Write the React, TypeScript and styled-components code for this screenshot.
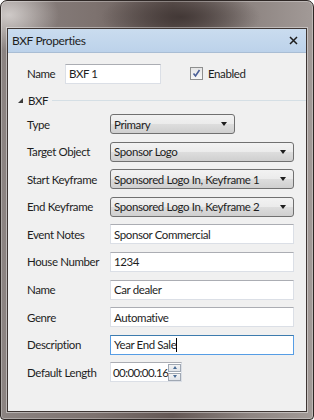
import React from 'react'
import styled, { createGlobalStyle } from 'styled-components'

const GlobalStyle = createGlobalStyle`
  html, body {
    margin: 0;
    padding: 0;
  }
  body {
    width: 314px;
    height: 420px;
    overflow: hidden;
    font-family: Lato, 'Open Sans', sans-serif;
    font-size: 11.5px;
    letter-spacing: -0.4px;
    color: #1e1e1e;
  }
`

const Frame = styled.div`
  box-sizing: border-box;
  width: 314px;
  height: 420px;
  padding: 27px 6px 7px 6px;
  border: 1px solid #2e2725;
  border-radius: 7px 7px 4px 4px;
  background:
    radial-gradient(ellipse 50px 35px at 8px 14px, rgba(230, 226, 224, 0.75), transparent),
    radial-gradient(ellipse 80px 28px at 180px 16px, rgba(60, 50, 48, 0.85), transparent),
    linear-gradient(90deg, #8c8482 0%, #7d726f 30%, #645855 55%, #8e8582 80%, #a29a97 100%);
  box-shadow: inset 0 0 0 1px rgba(255, 255, 255, 0.3);
`

const Dialog = styled.div`
  height: 100%;
  box-sizing: border-box;
  display: flex;
  flex-direction: column;
  border: 1px solid #3e3634;
  background: #f0f0f0;
  box-shadow: 0 0 0 1px rgba(255, 255, 255, 0.4);
`

const TitleBar = styled.div`
  height: 23px;
  flex-shrink: 0;
  display: flex;
  align-items: center;
  justify-content: space-between;
  padding: 0 8px 0 4px;
  font-size: 12px;
  background: linear-gradient(180deg, #cadcef 0%, #bcd2ea 100%);
  border-bottom: 1px solid #a9bdd4;
`

const CloseIcon = () => (
  <svg width="9" height="9" viewBox="0 0 9 9">
    <path d="M1 1 L8 8 M8 1 L1 8" stroke="#1e1e1e" strokeWidth="1.5" />
  </svg>
)

const Body = styled.div`
  padding: 10px 12px 0 19px;
  display: flex;
  flex-direction: column;
`

const TopRow = styled.div`
  display: flex;
  align-items: center;
  height: 21px;
`

const TopLabel = styled.span`
  width: 38px;
`

const CheckLabel = styled.label`
  display: flex;
  align-items: center;
  gap: 5px;
  margin-left: 29px;
`

const CheckBox = styled.span`
  box-sizing: border-box;
  width: 13px;
  height: 13px;
  border: 1px solid #8e8f8f;
  background: linear-gradient(180deg, #e6e6e6 0%, #f8f8f8 100%);
  display: flex;
  align-items: center;
  justify-content: center;
`

const GroupHeader = styled.div`
  display: flex;
  align-items: center;
  margin: 7px -12px 0 -11px;
  height: 18px;
`

const Triangle = styled.span`
  width: 0;
  height: 0;
  border-left: 5px solid transparent;
  border-bottom: 5px solid #3c3c3c;
  margin: 1px 5px 0 2px;
`

const GroupTitle = styled.span`
  margin-right: 4px;
`

const GroupLine = styled.span`
  flex: 1;
  height: 1px;
  background: #d5dfe5;
`

const Grid = styled.div`
  display: grid;
  grid-template-columns: 83px 1fr;
  row-gap: 7.6px;
  align-items: center;
  margin-top: 5px;
`

const Label = styled.span`
  white-space: nowrap;
`

const Combo = styled.div<{ $width?: number }>`
  box-sizing: border-box;
  height: 20px;
  width: ${p => (p.$width ? `${p.$width}px` : '100%')};
  display: flex;
  align-items: center;
  justify-content: space-between;
  padding: 0 7px 0 3px;
  border: 1px solid #707070;
  border-radius: 3px;
  background: linear-gradient(180deg, #f2f2f2 0%, #ebebeb 50%, #dddddd 51%, #cfcfcf 100%);
`

const Arrow = styled.span`
  width: 0;
  height: 0;
  border-left: 3.5px solid transparent;
  border-right: 3.5px solid transparent;
  border-top: 4px solid #1e1e1e;
`

const TextBox = styled.div<{ $focused?: boolean; $width?: number }>`
  box-sizing: border-box;
  height: 20px;
  width: ${p => (p.$width ? `${p.$width}px` : '100%')};
  display: flex;
  align-items: center;
  padding: 0 3px;
  background: #ffffff;
  border: 1px solid ${p => (p.$focused ? '#569de5' : '#dbdfe6')};
  border-top-color: ${p => (p.$focused ? '#3d7bad' : '#abadb3')};
`

const Caret = styled.span`
  width: 1px;
  height: 14px;
  background: #000;
`

const SpinBox = styled(TextBox)`
  padding: 0 1px 0 2px;
  justify-content: space-between;
  letter-spacing: -0.6px;
`

const Spinner = styled.div`
  display: flex;
  flex-direction: column;
  gap: 1px;
`

const SpinButton = styled.span`
  box-sizing: border-box;
  width: 13px;
  height: 8px;
  border: 1px solid #a0a8b3;
  background: linear-gradient(180deg, #f4f4f4, #dfe3e8);
  display: flex;
  align-items: center;
  justify-content: center;
`

const SpinArrow = styled.span<{ $up?: boolean }>`
  width: 0;
  height: 0;
  border-left: 2.5px solid transparent;
  border-right: 2.5px solid transparent;
  ${p => (p.$up ? 'border-bottom: 3px solid #4a6d96;' : 'border-top: 3px solid #4a6d96;')}
`

const combos = [
  { label: 'Type', value: 'Primary', width: 125 },
  { label: 'Target Object', value: 'Sponsor Logo' },
  { label: 'Start Keyframe', value: 'Sponsored Logo In, Keyframe 1' },
  { label: 'End Keyframe', value: 'Sponsored Logo In, Keyframe 2' },
]

const texts = [
  { label: 'Event Notes', value: 'Sponsor Commercial' },
  { label: 'House Number', value: '1234' },
  { label: 'Name', value: 'Car dealer' },
  { label: 'Genre', value: 'Automative' },
]

export default function App() {
  return (
    <>
      <GlobalStyle />
      <Frame>
        <Dialog>
          <TitleBar>
            <span>BXF Properties</span>
            <CloseIcon />
          </TitleBar>
          <Body>
            <TopRow>
              <TopLabel>Name</TopLabel>
              <TextBox $width={96}>BXF 1</TextBox>
              <CheckLabel>
                <CheckBox>
                  <svg width="9" height="9" viewBox="0 0 9 9">
                    <path d="M1.5 4.5 L3.5 7 L7.5 1" stroke="#4a5f97" strokeWidth="1.6" fill="none" />
                  </svg>
                </CheckBox>
                Enabled
              </CheckLabel>
            </TopRow>
            <GroupHeader>
              <Triangle />
              <GroupTitle>BXF</GroupTitle>
              <GroupLine />
            </GroupHeader>
            <Grid>
              {combos.map(c => (
                <React.Fragment key={c.label}>
                  <Label>{c.label}</Label>
                  <Combo $width={c.width}>
                    <span>{c.value}</span>
                    <Arrow />
                  </Combo>
                </React.Fragment>
              ))}
              {texts.map(t => (
                <React.Fragment key={t.label}>
                  <Label>{t.label}</Label>
                  <TextBox>{t.value}</TextBox>
                </React.Fragment>
              ))}
              <Label>Description</Label>
              <TextBox $focused>
                Year End Sale
                <Caret />
              </TextBox>
              <Label>Default Length</Label>
              <SpinBox $width={72}>
                <span>00:00:00.16</span>
                <Spinner>
                  <SpinButton>
                    <SpinArrow $up />
                  </SpinButton>
                  <SpinButton>
                    <SpinArrow />
                  </SpinButton>
                </Spinner>
              </SpinBox>
            </Grid>
          </Body>
        </Dialog>
      </Frame>
    </>
  )
}
